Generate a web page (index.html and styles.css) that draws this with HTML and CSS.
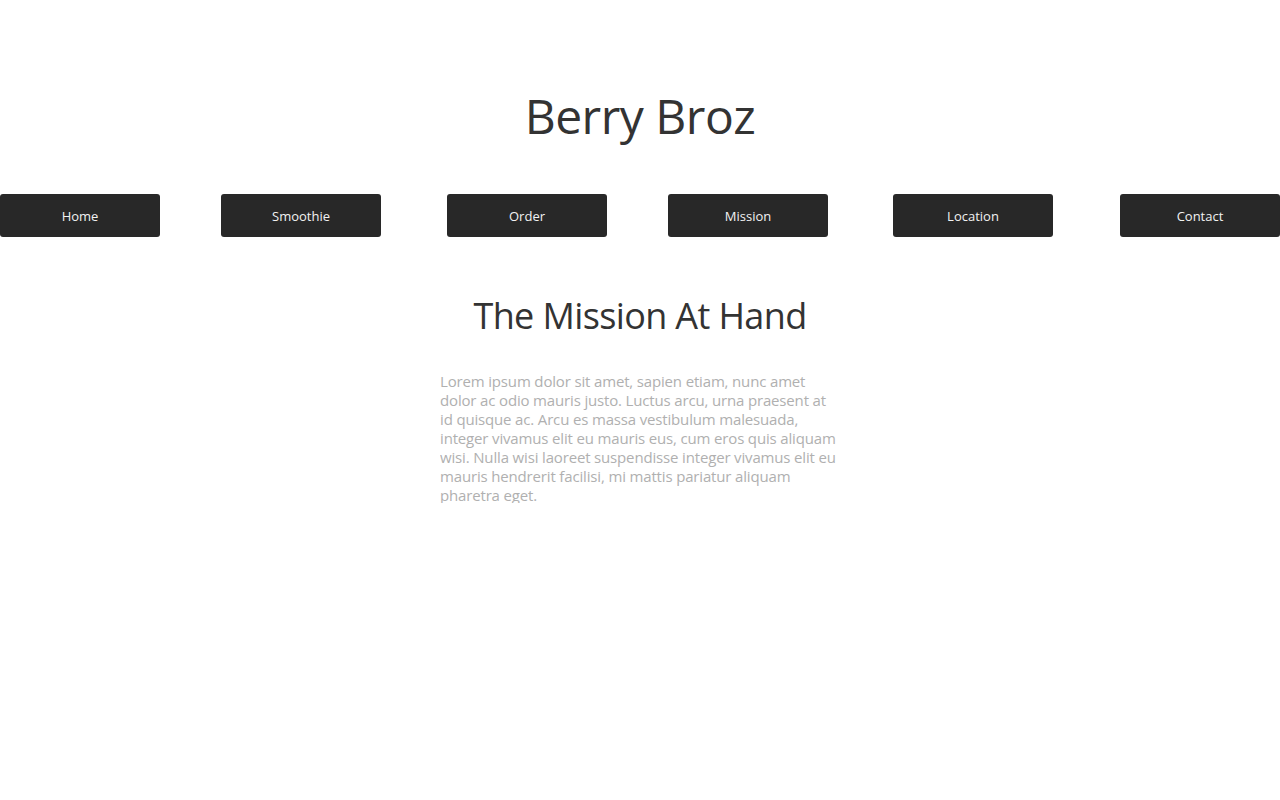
FILE: index.html
```html
<!DOCTYPE html>
<html lang="en">
<head>
<meta charset="utf-8">
<title>Berry Broz</title>
<link rel="stylesheet" href="styles.css">
</head>
<body>
<header class="site-header">
  <h1 class="site-title">Berry Broz</h1>
</header>
<nav class="main-nav">
  <a class="nav-btn" href="#">Home</a>
  <a class="nav-btn" href="#">Smoothie</a>
  <a class="nav-btn" href="#">Order</a>
  <a class="nav-btn" href="#">Mission</a>
  <a class="nav-btn" href="#">Location</a>
  <a class="nav-btn" href="#">Contact</a>
</nav>
<main class="content">
  <h2 class="section-title">The Mission At Hand</h2>
  <p class="section-text">Lorem ipsum dolor sit amet, sapien etiam, nunc amet dolor ac odio mauris justo. Luctus arcu, urna praesent at id quisque ac. Arcu es massa vestibulum malesuada, integer vivamus elit eu mauris eus, cum eros quis aliquam wisi. Nulla wisi laoreet suspendisse integer vivamus elit eu mauris hendrerit facilisi, mi mattis pariatur aliquam pharetra eget.</p>
</main>
</body>
</html>
```
FILE: styles.css
```css
html, body {
  margin: 0;
  padding: 0;
  background: #ffffff;
}

body {
  font-family: "Open Sans", "Noto Sans", sans-serif;
  color: #333333;
}

.site-header {
  padding-top: 83px;
  text-align: center;
}

.site-title {
  margin: 0;
  font-size: 48px;
  line-height: 65px;
  font-weight: 400;
  letter-spacing: -0.5px;
  color: #333333;
}

.main-nav {
  display: flex;
  margin-top: 46px;
}

.nav-btn {
  display: flex;
  align-items: center;
  justify-content: center;
  width: 160px;
  height: 43px;
  flex: none;
  background: #282828;
  border-radius: 3px;
  color: #f2f2f2;
  font-size: 13px;
  text-decoration: none;
}

.nav-btn:nth-child(2) { margin-left: 61px; }
.nav-btn:nth-child(3) { margin-left: 66px; }
.nav-btn:nth-child(4) { margin-left: 61px; }
.nav-btn:nth-child(5) { margin-left: 65px; }
.nav-btn:nth-child(6) { margin-left: 67px; }

.content {
  display: flex;
  flex-direction: column;
  align-items: center;
}

.section-title {
  margin: 54px 0 0;
  font-size: 36px;
  line-height: 49px;
  font-weight: 400;
  letter-spacing: -0.63px;
  color: #333333;
}

.section-text {
  width: 400px;
  height: 131px;
  overflow: hidden;
  margin: 32px 0 0;
  font-size: 15px;
  line-height: 19px;
  letter-spacing: -0.16px;
  color: #b0b0b0;
}
```
